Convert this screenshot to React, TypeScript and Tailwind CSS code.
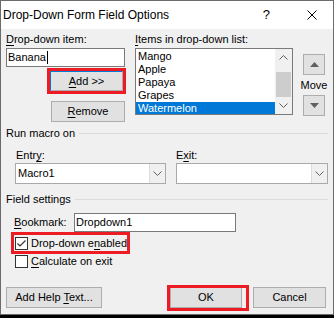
import React from "react";

const Chevron = ({ up = false }: { up?: boolean }) => (
  <svg width="9" height="5" viewBox="0 0 9 5" className="block">
    {up ? (
      <polyline points="0.5,4.5 4.5,0.5 8.5,4.5" fill="none" stroke="#606060" strokeWidth="1" />
    ) : (
      <polyline points="0.5,0.5 4.5,4.5 8.5,0.5" fill="none" stroke="#606060" strokeWidth="1" />
    )}
  </svg>
);

const Tri = ({ up = false }: { up?: boolean }) => (
  <svg width="9" height="5" viewBox="0 0 9 5" className="block">
    {up ? <polygon points="0,5 4.5,0 9,5" fill="#606060" /> : <polygon points="0,0 4.5,5 9,0" fill="#606060" />}
  </svg>
);

const Combo = ({ value }: { value: string }) => (
  <div className="flex h-[21px] w-full border border-[#a9a9a9] bg-white">
    <div className="flex flex-1 items-center pl-[2px]">{value}</div>
    <div className="flex w-[16px] items-center justify-center border-l border-[#dcdcdc] bg-[#f0f0f0]">
      <Chevron />
    </div>
  </div>
);

const Btn = ({ children, className = "" }: { children: React.ReactNode; className?: string }) => (
  <div className={"flex items-center justify-center whitespace-nowrap border border-[#adadad] bg-[#e1e1e1] " + className}>
    {children}
  </div>
);

export default function App() {
  const items = ["Mango", "Apple", "Papaya", "Grapes", "Watermelon"];
  return (
    <div className="h-[318px] w-[334px] bg-black font-['Liberation_Sans',Arial,sans-serif] text-[11px] leading-[13px] text-black">
      <div className="flex h-[315px] w-[334px] flex-col border border-[#6b6b6b] bg-[#f0f0f0]">
        {/* title bar */}
        <div className="flex h-[28px] items-center bg-white">
          <div className="pl-[2px] text-[12px] leading-[14px]">Drop-Down Form Field Options</div>
          <div className="ml-auto mr-[37px] text-[13px] leading-[14px]">?</div>
          <svg width="10" height="10" viewBox="0 0 10 10" className="mr-[16px] block">
            <line x1="0.5" y1="0.5" x2="9.5" y2="9.5" stroke="#000" strokeWidth="1" />
            <line x1="9.5" y1="0.5" x2="0.5" y2="9.5" stroke="#000" strokeWidth="1" />
          </svg>
        </div>

        {/* row 1 */}
        <div className="mt-[4px] flex">
          <div className="ml-[5px] flex w-[119px] flex-col">
            <div className="h-[13px] whitespace-nowrap">
              <span className="underline underline-offset-[2px]">D</span>rop-down item:
            </div>
            <div className="mt-[2px] flex h-[19px] items-center border border-[#7a7a7a] bg-white pl-[1px]">
              Banana<span className="ml-[1px] inline-block h-[13px] w-px bg-black" />
            </div>
            <div className="ml-[44px] mt-[4px] flex h-[20px] w-[73px] items-center justify-center border border-[#adadad] border-l-[#0078d7] border-t-[#0078d7] bg-[#e1e1e1] outline outline-[3px] outline-[#ed1c24]">
              <span className="underline underline-offset-[2px]">A</span>dd &gt;&gt;
            </div>
            <Btn className="ml-[45px] mt-[10px] h-[21px] w-[74px]">
              <span>
                <span className="underline underline-offset-[2px]">R</span>emove
              </span>
            </Btn>
          </div>

          <div className="ml-[10px] flex w-[158px] flex-col">
            <div className="h-[13px] whitespace-nowrap">
              <span className="underline underline-offset-[2px]">I</span>tems in drop-down list:
            </div>
            <div className="mt-[2px] flex h-[67px] border border-[#7a7a7a] bg-white">
              <div className="flex flex-1 flex-col overflow-hidden pt-[1px]">
                {items.map((it) => (
                  <div
                    key={it}
                    className={
                      "h-[13px] shrink-0 pl-[2px] " + (it === "Watermelon" ? "bg-[#0078d7] text-white" : "")
                    }
                  >
                    {it}
                  </div>
                ))}
              </div>
              <div className="flex w-[17px] flex-col bg-[#f0f0f0]">
                <div className="flex h-[17px] items-center justify-center">
                  <Chevron up />
                </div>
                <div className="flex-1">
                  <div className="mx-[1px] mt-[6px] h-[25px] bg-[#cdcdcd]" />
                </div>
                <div className="flex h-[17px] items-center justify-center">
                  <Chevron />
                </div>
              </div>
            </div>
          </div>

          <div className="ml-[10px] flex w-[22px] flex-col items-center">
            <Btn className="mt-[21px] h-[21px] w-[22px]">
              <Tri up />
            </Btn>
            <div className="mt-[4px] h-[13px] text-center">Move</div>
            <Btn className="mt-[3px] h-[21px] w-[22px]">
              <Tri />
            </Btn>
          </div>
        </div>

        {/* Run macro on */}
        <div className="ml-[5px] mr-[5px] mt-[5px] flex h-[13px] items-center">
          <span className="whitespace-nowrap">Run macro on</span>
          <div className="ml-[4px] h-px flex-1 bg-[#dcdcdc]" />
        </div>

        <div className="mt-[9px] flex">
          <div className="ml-[14px] flex w-[151px] flex-col">
            <div className="h-[13px] pl-[1px]">
              Entr<span className="underline underline-offset-[2px]">y</span>:
            </div>
            <div className="mt-[1px]">
              <Combo value="Macro1" />
            </div>
          </div>
          <div className="ml-[10px] flex w-[152px] flex-col">
            <div className="h-[13px]">
              E<span className="underline underline-offset-[2px]">x</span>it:
            </div>
            <div className="mt-[1px]">
              <Combo value="" />
            </div>
          </div>
        </div>

        {/* Field settings */}
        <div className="ml-[5px] mr-[5px] mt-[9px] flex h-[13px] items-center">
          <span className="whitespace-nowrap">Field settings</span>
          <div className="ml-[4px] h-px flex-1 bg-[#dcdcdc]" />
        </div>

        <div className="ml-[13px] mt-[7px] flex items-center">
          <div className="w-[60px] whitespace-nowrap">
            <span className="underline underline-offset-[2px]">B</span>ookmark:
          </div>
          <div className="flex h-[19px] w-[162px] items-center border border-[#7a7a7a] bg-white pl-[1px]">
            Dropdown1
          </div>
        </div>

        <div className="ml-[13px] mt-[3px] flex h-[16px] w-[113px] items-center whitespace-nowrap outline outline-[3px] outline-[#ed1c24]">
          <div className="ml-[1px] flex h-[13px] w-[13px] shrink-0 items-center justify-center border border-[#333333] bg-white">
            <svg width="11" height="11" viewBox="0 0 11 11" className="block">
              <polyline points="1.5,5.5 4,8 9.5,2.5" fill="none" stroke="#333333" strokeWidth="1.2" />
            </svg>
          </div>
          <span className="ml-[3px]">
            Drop-down e<span className="underline underline-offset-[2px]">n</span>abled
          </span>
        </div>

        <div className="ml-[14px] mt-[4px] flex h-[13px] items-center whitespace-nowrap">
          <div className="h-[13px] w-[13px] shrink-0 border border-[#333333] bg-white" />
          <span className="ml-[3px]">
            <span className="underline underline-offset-[2px]">C</span>alculate on exit
          </span>
        </div>

        {/* bottom buttons */}
        <div className="mt-[19px] flex">
          <Btn className="ml-[5px] h-[21px] w-[96px]">
            <span>
              Add Help <span className="underline underline-offset-[2px]">T</span>ext...
            </span>
          </Btn>
          <div className="relative ml-[68px]">
            <Btn className="h-[21px] w-[72px]">OK</Btn>
            <div className="pointer-events-none absolute -bottom-[3px] -left-[3px] -right-[7px] -top-[2px] border-[3px] border-[#ed1c24]" />
          </div>
          <Btn className="ml-[11px] h-[21px] w-[73px]">Cancel</Btn>
        </div>
      </div>
    </div>
  );
}
